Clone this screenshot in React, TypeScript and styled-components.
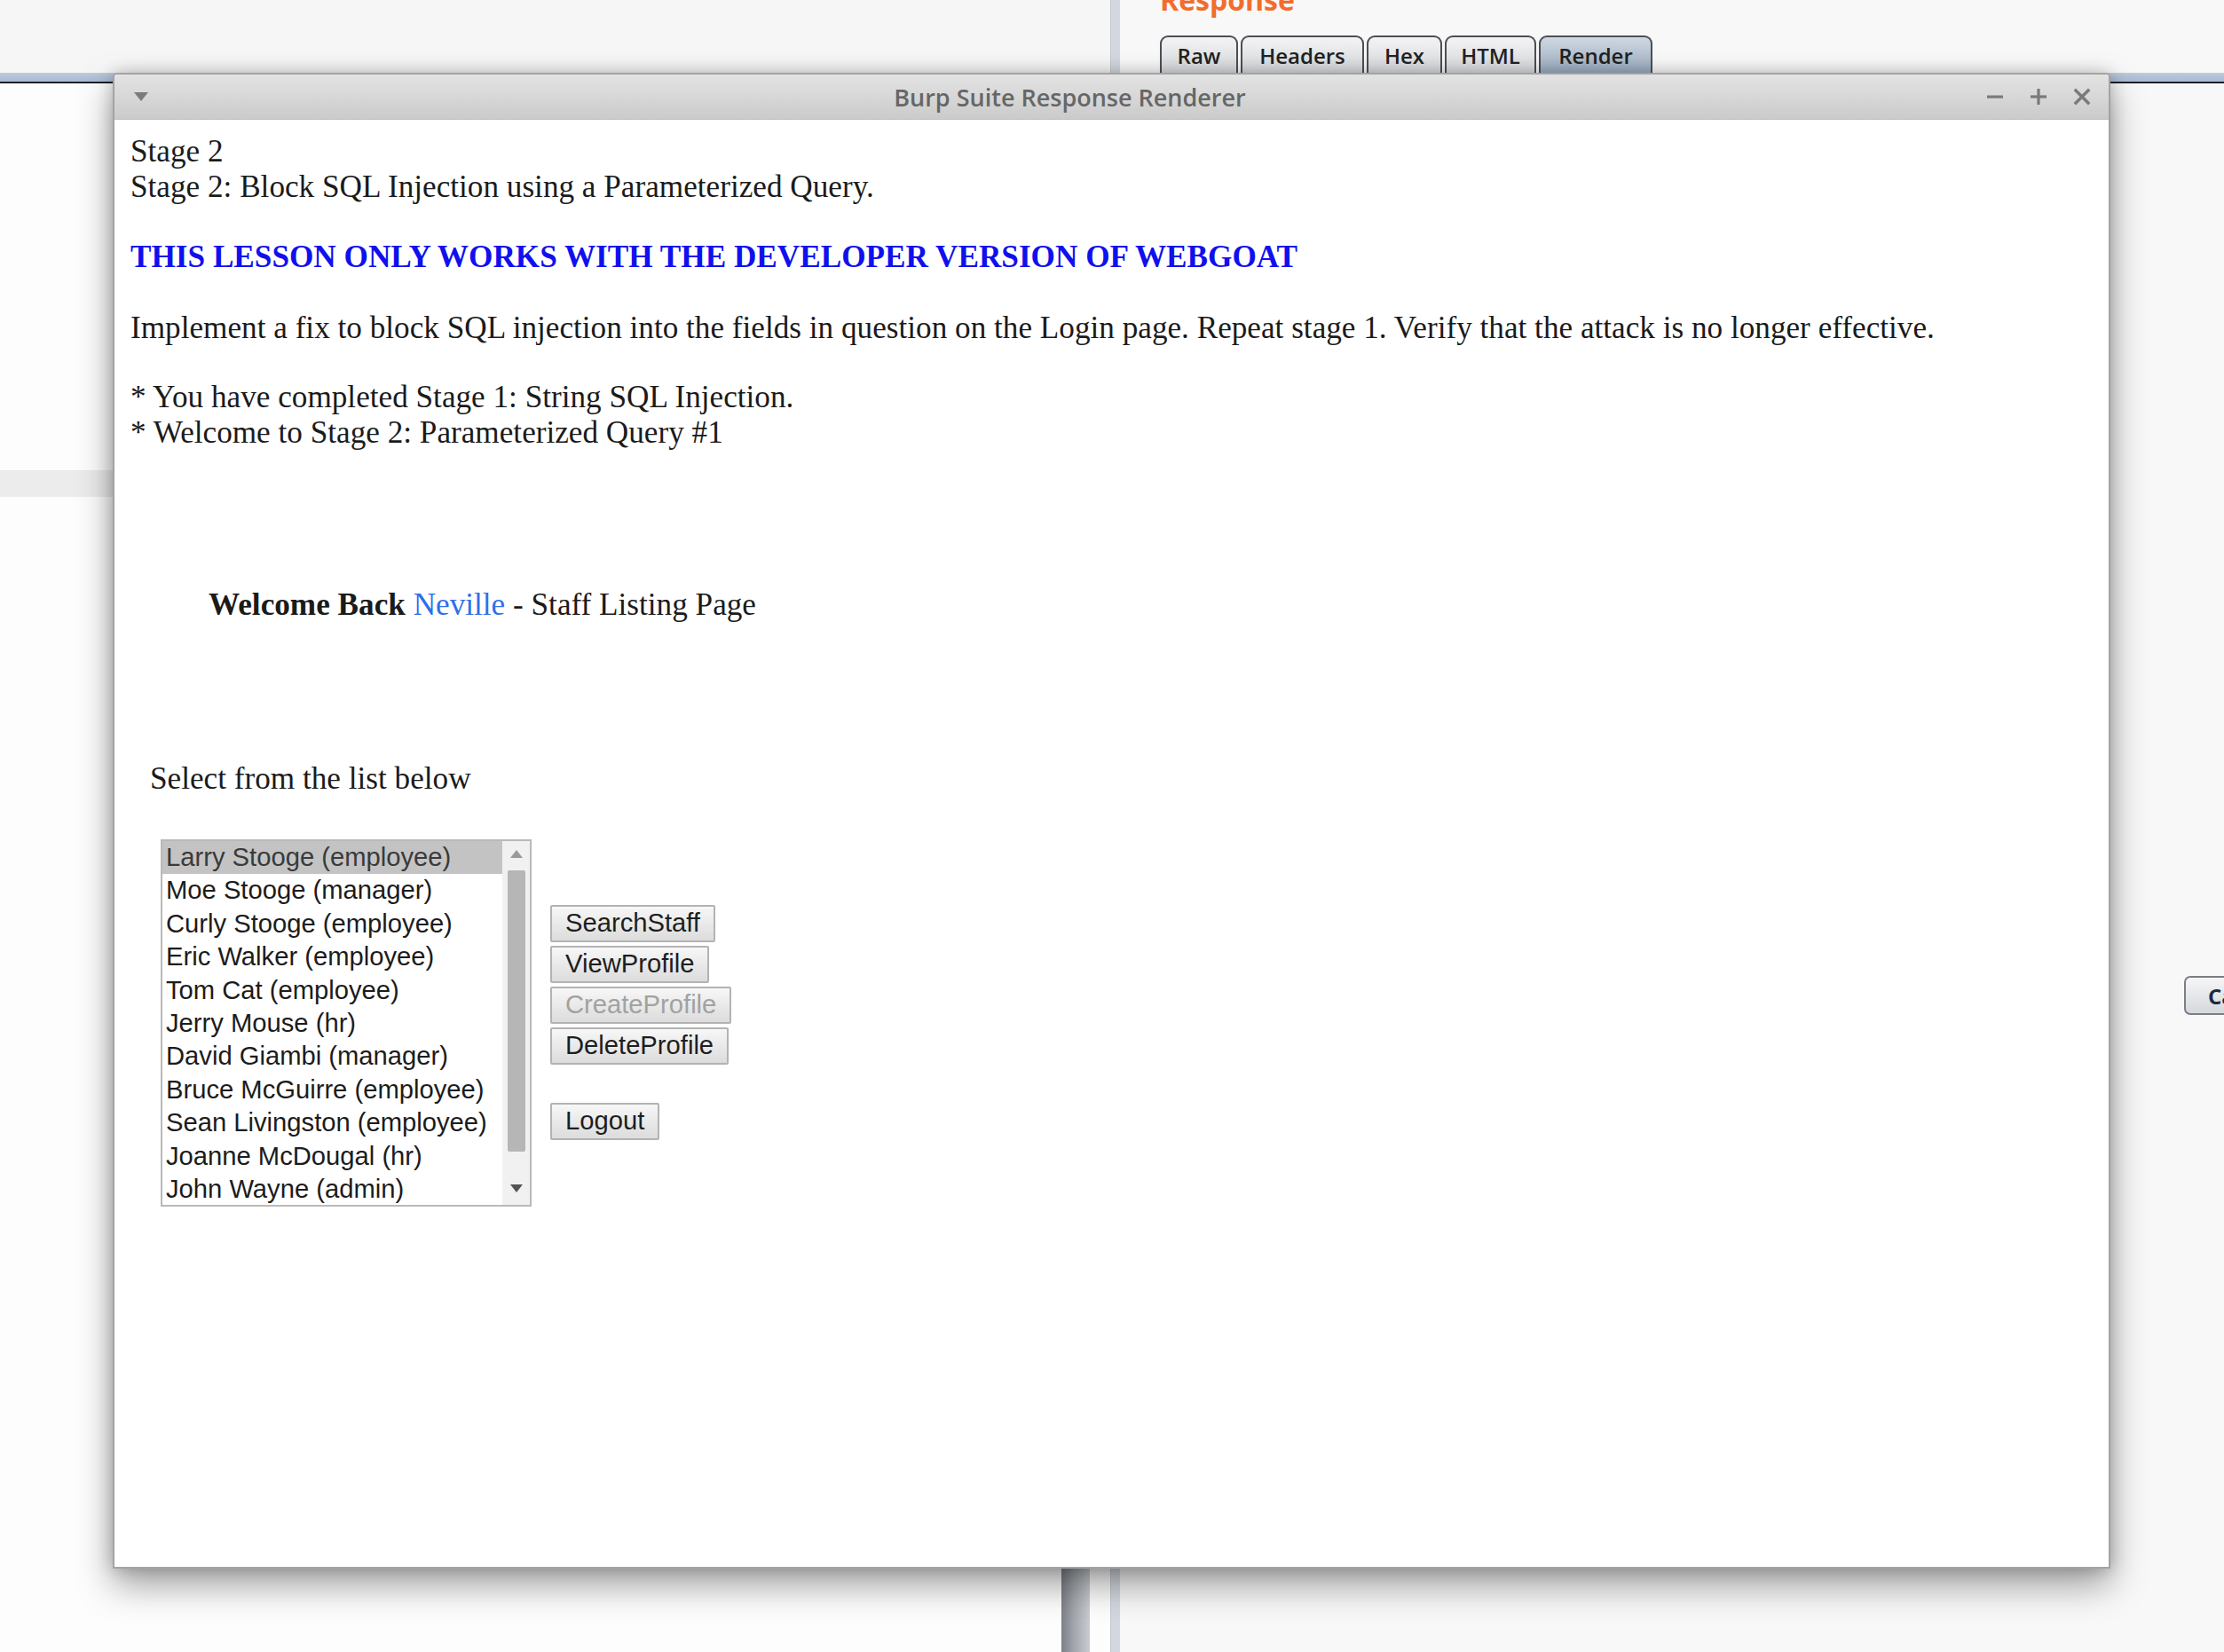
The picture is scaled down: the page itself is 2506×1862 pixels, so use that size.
import React from "react";
import styled, { createGlobalStyle } from "styled-components";

const Global = createGlobalStyle`
  html, body { margin: 0; padding: 0; }
  body { width: 2506px; height: 1862px; overflow: hidden; background: #fdfdfd; }
`;

const Desktop = styled.div`
  position: relative;
  width: 2506px;
  height: 1862px;
  overflow: hidden;
  display: flex;
  font-family: "Open Sans", "DejaVu Sans", sans-serif;
`;

/* ---------- background application ---------- */
const LeftPane = styled.div`
  width: 1251px;
  display: flex;
  flex-direction: column;
  background: #fdfdfd;
`;

const TopStrip = styled.div`
  height: 82px;
  background: #f6f6f6;
  flex: none;
`;

const PaneRule = styled.div`
  flex: none;
  height: 12px;
  background: linear-gradient(
    #c9cbce 0, #c9cbce 1px,
    #b9c9dd 1px, #a9bbd2 10px,
    #1b202b 10px, #1b202b 12px
  );
`;

const LeftBody = styled.div`
  flex: 1;
  display: flex;
`;

const LeftMain = styled.div`
  flex: 1;
  display: flex;
  flex-direction: column;
`;

const Band = styled.div`
  margin-top: 436px;
  height: 30px;
  background: #ececec;
`;

const VScroll = styled.div`
  width: 32px;
  margin-right: 23px;
  background: linear-gradient(90deg, #7c8087 0, #a3a7ad 45%, #c9ccd1 100%);
`;

const Divider = styled.div`
  width: 11px;
  background: #d3d8df;
  border-left: 1px solid #c2c8d0;
  box-sizing: border-box;
`;

const RightPane = styled.div`
  flex: 1;
  display: flex;
  flex-direction: column;
  background: #f8f8f8;
  overflow: hidden;
`;

const ResponseTitle = styled.div`
  height: 38px;
  padding-left: 45px;
  display: flex;
  align-items: flex-end;
  font-size: 32px;
  font-weight: 700;
  color: #f26c2c;
  line-height: 1;
  overflow: hidden;
  & > span { margin-bottom: 22px; }
`;

const TabRow = styled.div`
  height: 44px;
  padding-left: 45px;
  display: flex;
  align-items: flex-end;
  gap: 3px;
`;

const Tab = styled.div<{ $w: number; $active?: boolean }>`
  width: ${(p) => p.$w}px;
  height: 42px;
  box-sizing: border-box;
  border: 2px solid #4c4f55;
  border-bottom: none;
  border-radius: 9px 9px 0 0;
  display: flex;
  align-items: center;
  justify-content: center;
  font-size: 24px;
  font-weight: 600;
  color: #222;
  background: ${(p) =>
    p.$active
      ? "linear-gradient(#cfd8e2, #9aabbf)"
      : "linear-gradient(#f3f3f4, #d6d8db)"};
`;

const RightBody = styled.div`
  flex: 1;
  display: flex;
  flex-direction: column;
`;

const EdgeButton = styled.div`
  margin-top: 1006px;
  margin-left: 1199px;
  width: 140px;
  height: 44px;
  flex: none;
  box-sizing: border-box;
  border: 2px solid #7b7e84;
  border-radius: 7px;
  background: linear-gradient(#f6f6f7, #d5d8dc);
  display: flex;
  align-items: center;
  padding-left: 25px;
  font-size: 24px;
  font-weight: 700;
  color: #1c2947;
`;

/* ---------- renderer window ---------- */
const Window = styled.div`
  position: absolute;
  left: 127px;
  top: 82px;
  width: 2251px;
  height: 1686px;
  box-sizing: border-box;
  display: flex;
  flex-direction: column;
  border: 2px solid #a3a3a3;
  border-radius: 5px 5px 0 0;
  background: #fff;
  box-shadow: 0 18px 40px rgba(0, 0, 0, 0.38), 0 0 18px rgba(0, 0, 0, 0.2);
`;

const TitleBar = styled.div`
  height: 50px;
  flex: none;
  display: grid;
  grid-template-columns: 1fr auto 1fr;
  align-items: center;
  padding: 0 20px 0 22px;
  background: linear-gradient(#e3e3e3, #cbcbcb);
  border-bottom: 1px solid #c0c0c0;
  border-radius: 4px 4px 0 0;
`;

const TitleText = styled.div`
  font-family: "Open Sans", "DejaVu Sans", sans-serif;
  font-size: 27px;
  font-weight: 600;
  color: #666;
  margin-right: 96px;
`;

const TitleControls = styled.div`
  display: flex;
  justify-content: flex-end;
  gap: 29px;
  align-items: center;
`;

const Page = styled.div`
  flex: 1;
  display: flex;
  flex-direction: column;
  padding: 16px 0 0 18px;
  font-family: "Liberation Serif", "Times New Roman", serif;
  font-size: 35.2px;
  line-height: 40px;
  color: #1b1b1b;
`;

const Line = styled.div<{ $mt?: number; $ml?: number }>`
  margin-top: ${(p) => p.$mt ?? 0}px;
  margin-left: ${(p) => p.$ml ?? 0}px;
  white-space: nowrap;
`;

const Warning = styled(Line)`
  color: #1010ee;
  font-weight: 700;
`;

const Name = styled.span`
  color: #2f6fea;
`;

const StaffArea = styled.div`
  margin-top: 48px;
  margin-left: 34px;
  display: flex;
  align-items: flex-start;
  gap: 21px;
`;

const ListBox = styled.div`
  width: 418px;
  height: 414px;
  box-sizing: border-box;
  border: 2px solid #b9b9b9;
  display: flex;
  background: #fff;
`;

const ListItems = styled.div`
  flex: 1;
  display: flex;
  flex-direction: column;
`;

const Item = styled.div<{ $sel?: boolean }>`
  height: 37.4px;
  line-height: 37.4px;
  padding-left: 4px;
  font-family: "Liberation Sans", Arial, sans-serif;
  font-size: 29.2px;
  color: ${(p) => (p.$sel ? "#3a3a3a" : "#1c1c1c")};
  background: ${(p) => (p.$sel ? "#c3c3c3" : "transparent")};
  white-space: nowrap;
`;

const ScrollTrack = styled.div`
  width: 31px;
  background: #f1f1f1;
  display: flex;
  flex-direction: column;
  align-items: center;
  padding: 10px 0 14px;
  box-sizing: border-box;
`;

const Thumb = styled.div`
  width: 20px;
  flex: 1;
  margin: 14px 0 37px;
  background: #b6b6b6;
  border-radius: 2px;
`;

const Buttons = styled.div`
  display: flex;
  flex-direction: column;
  align-items: flex-start;
  gap: 4px;
  margin-top: 74px;
`;

const FormButton = styled.button<{ $mt?: number }>`
  margin-top: ${(p) => p.$mt ?? 0}px;
  height: 42px;
  padding: 0 15px;
  box-sizing: border-box;
  border: 2px solid #b3b3b3;
  border-radius: 2px;
  background: linear-gradient(#f7f7f7, #dcdcdc);
  font-family: "Liberation Sans", Arial, sans-serif;
  font-size: 29.2px;
  color: #1e1e1e;
  line-height: 1;
  &:disabled { color: #a2a2a2; }
`;

const Arrow = ({ up }: { up?: boolean }) => (
  <svg width="14" height="9" viewBox="0 0 14 9">
    <polygon points={up ? "7,0 14,9 0,9" : "0,0 14,0 7,9"} fill={up ? "#9a9a9a" : "#555"} />
  </svg>
);

const Ctrl = ({ kind }: { kind: "min" | "max" | "close" }) => (
  <svg width="20" height="20" viewBox="0 0 20 20">
    {kind === "min" && <rect x="1" y="8.5" width="18" height="3.2" fill="#7a7a7a" />}
    {kind === "max" && (
      <g fill="#7a7a7a">
        <rect x="1" y="8.4" width="18" height="3.2" />
        <rect x="8.4" y="1" width="3.2" height="18" />
      </g>
    )}
    {kind === "close" && (
      <g stroke="#7a7a7a" strokeWidth="3.4" strokeLinecap="square">
        <line x1="3" y1="3" x2="17" y2="17" />
        <line x1="17" y1="3" x2="3" y2="17" />
      </g>
    )}
  </svg>
);

const staff = [
  "Larry Stooge (employee)",
  "Moe Stooge (manager)",
  "Curly Stooge (employee)",
  "Eric Walker (employee)",
  "Tom Cat (employee)",
  "Jerry Mouse (hr)",
  "David Giambi (manager)",
  "Bruce McGuirre (employee)",
  "Sean Livingston (employee)",
  "Joanne McDougal (hr)",
  "John Wayne (admin)",
];

export default function App() {
  return (
    <Desktop>
      <Global />
      <LeftPane>
        <TopStrip />
        <PaneRule />
        <LeftBody>
          <LeftMain>
            <Band />
          </LeftMain>
          <VScroll />
        </LeftBody>
      </LeftPane>
      <Divider />
      <RightPane>
        <ResponseTitle>
          <span>Response</span>
        </ResponseTitle>
        <TabRow>
          <Tab $w={88}>Raw</Tab>
          <Tab $w={139}>Headers</Tab>
          <Tab $w={85}>Hex</Tab>
          <Tab $w={103}>HTML</Tab>
          <Tab $w={128} $active>
            Render
          </Tab>
        </TabRow>
        <PaneRule />
        <RightBody>
          <EdgeButton>Cancel</EdgeButton>
        </RightBody>
      </RightPane>

      <Window>
        <TitleBar>
          <svg width="16" height="10" viewBox="0 0 16 10">
            <polygon points="0,0 16,0 8,10" fill="#7c7c7c" />
          </svg>
          <TitleText>Burp Suite Response Renderer</TitleText>
          <TitleControls>
            <Ctrl kind="min" />
            <Ctrl kind="max" />
            <Ctrl kind="close" />
          </TitleControls>
        </TitleBar>
        <Page>
          <Line>Stage 2</Line>
          <Line>Stage 2: Block SQL Injection using a Parameterized Query.</Line>
          <Warning $mt={39}>THIS LESSON ONLY WORKS WITH THE DEVELOPER VERSION OF WEBGOAT</Warning>
          <Line $mt={40}>
            Implement a fix to block SQL injection into the fields in question on the Login page. Repeat stage 1. Verify
            that the attack is no longer effective.
          </Line>
          <Line $mt={38}>* You have completed Stage 1: String SQL Injection.</Line>
          <Line>* Welcome to Stage 2: Parameterized Query #1</Line>
          <Line $mt={154} $ml={88}>
            <b>Welcome Back </b>
            <Name>Neville</Name> - Staff Listing Page
          </Line>
          <Line $mt={156} $ml={22}>
            Select from the list below
          </Line>
          <StaffArea>
            <ListBox>
              <ListItems>
                {staff.map((s, i) => (
                  <Item key={s} $sel={i === 0}>
                    {s}
                  </Item>
                ))}
              </ListItems>
              <ScrollTrack>
                <Arrow up />
                <Thumb />
                <Arrow />
              </ScrollTrack>
            </ListBox>
            <Buttons>
              <FormButton>SearchStaff</FormButton>
              <FormButton>ViewProfile</FormButton>
              <FormButton disabled>CreateProfile</FormButton>
              <FormButton>DeleteProfile</FormButton>
              <FormButton $mt={39}>Logout</FormButton>
            </Buttons>
          </StaffArea>
        </Page>
      </Window>
    </Desktop>
  );
}
